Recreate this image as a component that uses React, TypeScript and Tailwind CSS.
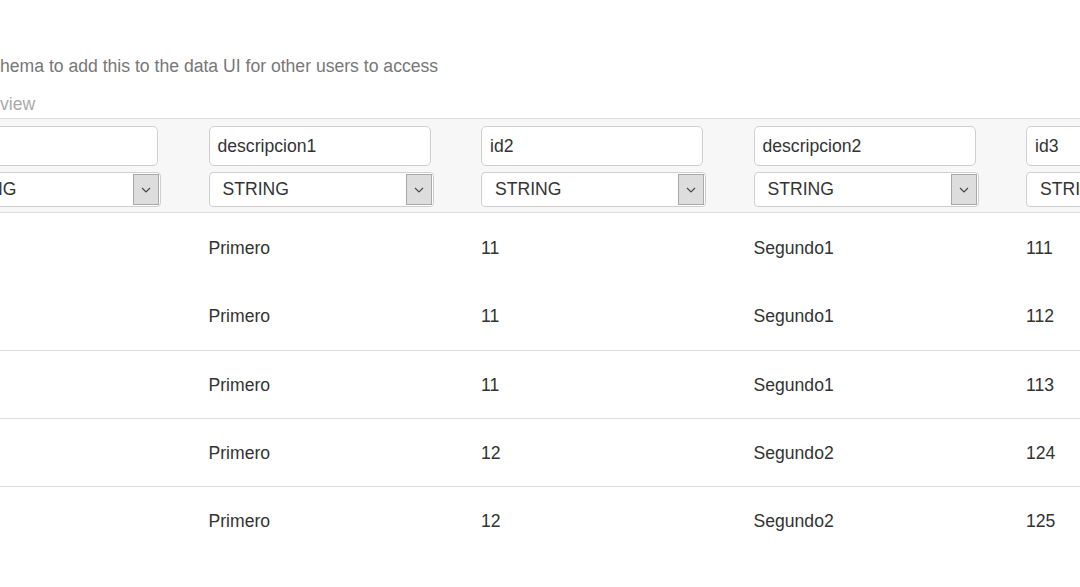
import React from "react";

const columns = ["id1", "descripcion1", "id2", "descripcion2", "id3"];

const rows = [
  ["1", "Primero", "11", "Segundo1", "111"],
  ["1", "Primero", "11", "Segundo1", "112"],
  ["1", "Primero", "11", "Segundo1", "113"],
  ["1", "Primero", "12", "Segundo2", "124"],
  ["1", "Primero", "12", "Segundo2", "125"],
];

const TypeSelect = () => (
  <div className="flex h-[35px] w-[225px] items-stretch rounded-[4px] border border-[#cfcfcf] bg-white">
    <span className="flex flex-1 items-center pl-[13px] text-[17.6px] text-[#333]">STRING</span>
    <span className="my-[1px] mr-[1px] flex w-[26px] items-center justify-center border border-[#a9a9a9] bg-[#dddddd]">
      <svg width="10" height="6" viewBox="0 0 10 6" fill="none">
        <path d="M1 1l4 4 4-4" stroke="#444" strokeWidth="1.1" />
      </svg>
    </span>
  </div>
);

const App = () => {
  return (
    <div className="h-[587px] w-[1080px] overflow-hidden bg-white font-['Liberation_Sans',Arial,sans-serif]">
      <div className="pt-[54px]">
        <p className="h-[24px] text-[17.6px] leading-[24px] text-[#777]">
          hema to add this to the data UI for other users to access
        </p>
        <p className="mt-[14px] h-[24px] text-[17.6px] leading-[24px] text-[#aaa]">view</p>
      </div>

      <div className="mt-[2px] ml-[-64px] w-[1400px]">
        <div className="flex h-[95px] items-start border-y border-[#dcdcdc] bg-[#f7f7f7] pt-[7px]">
          {columns.map((c) => (
            <div key={c} className="flex w-[272.5px] shrink-0 flex-col gap-[6px]">
              <div className="flex h-[40px] w-[222px] items-center rounded-[5px] border border-[#cfcfcf] bg-white pl-[8px] text-[17.6px] text-[#333]">
                {c}
              </div>
              <TypeSelect />
            </div>
          ))}
        </div>

        {rows.map((r, i) => (
          <div
            key={i}
            className={
              i >= 2
                ? "flex h-[68.25px] items-center border-t border-[#dcdcdc] pt-[2px]"
                : "flex h-[68.25px] items-center pt-[2px]"
            }
          >
            {r.map((v, j) => (
              <div key={j} className="w-[272.5px] shrink-0 text-[17.6px] text-[#333]">
                {v}
              </div>
            ))}
          </div>
        ))}
      </div>
    </div>
  );
};

export default App;
